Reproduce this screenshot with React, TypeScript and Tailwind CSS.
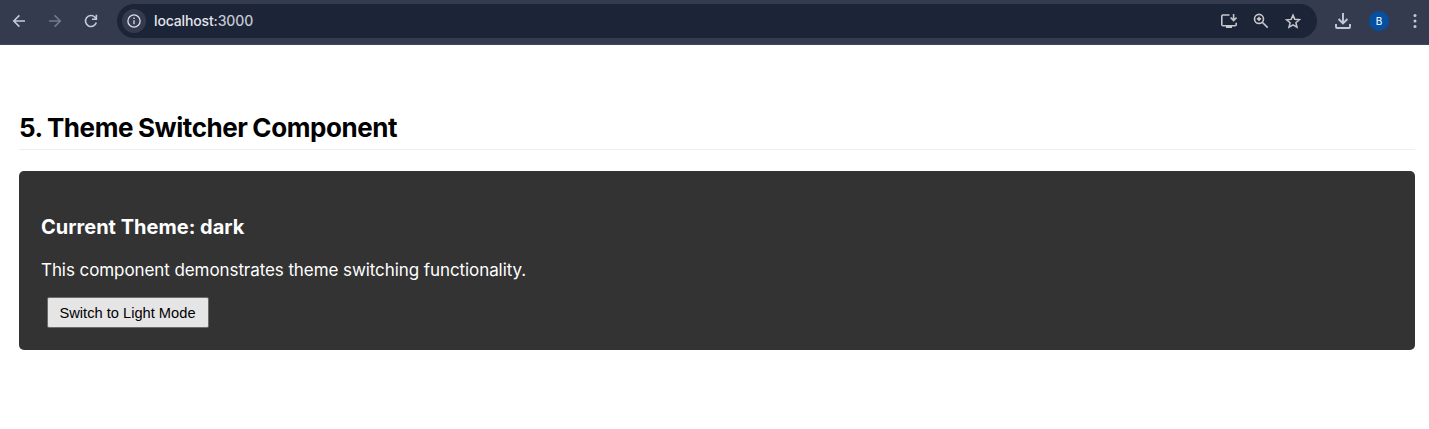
import React, { useState } from "react";

const stroke = { fill: "none", stroke: "currentColor", strokeWidth: 1.6 };

function Toolbar() {
  return (
    <header className="flex h-[45px] items-start border-b border-[#41475a] bg-[#343b4f] pt-1 text-[#c3c9dd]">
      <div className="flex h-[34px] w-[117px] shrink-0 items-center pl-[11px]">
        <svg className="size-4" viewBox="0 0 16 16" {...stroke}>
          <path d="M14 8H3M8.4 2.4 2.8 8l5.6 5.6" />
        </svg>
        <svg className="ml-5 size-4 text-[#747a8e]" viewBox="0 0 16 16" {...stroke}>
          <path d="M2 8h11M7.6 2.4 13.2 8l-5.6 5.6" />
        </svg>
        <svg className="ml-5 size-4" viewBox="0 0 16 16" {...stroke}>
          <path d="M13.3 9.5A5.5 5.5 0 1 1 12 4.2l1.3 1.6M13.4 1.8v4.5H9" />
        </svg>
      </div>
      <div className="flex h-[34px] w-[1200px] shrink-0 items-center rounded-full bg-[#1c2438] pl-[5px] pr-4">
        <span className="flex size-6 items-center justify-center rounded-full bg-[#343b4f] text-[#dcdee8]">
          <svg className="size-4" viewBox="0 0 16 16" fill="none" stroke="currentColor" strokeWidth="1.3">
            <circle cx="8" cy="8" r="6.1" />
            <path d="M8 7.2v4M8 4.5v1.5" />
          </svg>
        </span>
        <span className="ml-2 font-[Inter,sans-serif] text-[14px] font-medium leading-5 tracking-[-0.14px] text-[#e3e5eb]">
          localhost<span className="text-[#c6c9d2]">:3000</span>
        </span>
        <div className="ml-auto flex items-center gap-4 text-[#c7c7c9]">
          <svg className="h-4 w-[18px]" viewBox="0 0 18 16" fill="none" stroke="currentColor" strokeWidth="1.6">
            <path d="M10.5 2H4q-1.2 0-1.2 1v8.7q0 1 1.2 1H16q1.2 0 1.2-1V9.8M14.6 1v6M11.6 4.5l3 3 3-3" />
            <path d="M7 12.4h6V15H7z" fill="currentColor" stroke="none" />
          </svg>
          <svg className="size-4" viewBox="0 0 16 16" fill="none" stroke="currentColor" strokeWidth="1.6">
            <circle cx="6" cy="5.9" r="4.5" />
            <path d="m9.3 9.2 5.4 5.4M6 3.8V8M3.9 5.9h4.2" />
          </svg>
          <svg className="size-4" viewBox="0 0 16 16" fill="none" stroke="currentColor" strokeWidth="1.5">
            <path d="m8 2.1 1.8 4.2 4.6.4-3.5 3 1.1 4.5L8 11.9l-4 2.4 1.1-4.5-3.5-3 4.6-.4z" />
          </svg>
        </div>
      </div>
      <div className="flex h-[34px] items-center pl-[17px]">
        <svg className="size-[18px]" viewBox="0 0 18 18" fill="none" stroke="currentColor" strokeWidth="1.9">
          <path d="M9 1v10M4.6 7 9 11.4 13.4 7M2 12v3q0 1 1 1h12q1 0 1-1v-3" />
        </svg>
        <span className="ml-[17px] flex size-5 items-center justify-center rounded-full bg-[#0550a0] font-[Inter,sans-serif] text-[10px] font-medium text-[#e6eefa]">B</span>
        <svg className="ml-[22px] h-4 w-2" viewBox="0 0 8 16" fill="currentColor">
          <circle cx="4" cy="2.6" r="1.5" />
          <circle cx="4" cy="8" r="1.5" />
          <circle cx="4" cy="13.4" r="1.5" />
        </svg>
      </div>
    </header>
  );
}

export default function App() {
  const [theme, setTheme] = useState("dark");
  const dark = theme === "dark";
  return (
    <div className="h-[429px] overflow-hidden bg-white font-[Inter,sans-serif] text-black">
      <Toolbar />
      <main className="pl-[19px] pr-[14px] pt-[67px]">
        <h2 className="h-[38px] whitespace-nowrap border-b border-[#eeeeee] text-[26px] font-bold leading-8 tracking-[-0.42px] [word-spacing:-0.9px]">
          5. Theme Switcher Component
        </h2>
        <section className={`mt-[21px] h-[179px] rounded-[5px] px-[22px] pt-[42px] ${dark ? "bg-[#333333] text-white" : "bg-[#eeeeee] text-black"}`}>
          <h3 className="whitespace-nowrap text-[20px] font-bold leading-7 tracking-[0.01px]">Current Theme: {theme}</h3>
          <p className="mt-4 whitespace-nowrap text-[17px] leading-[26px] tracking-[-0.08px]">
            This component demonstrates theme switching functionality.
          </p>
          <button
            onClick={() => setTheme(dark ? "light" : "dark")}
            className="ml-[6px] mt-[14px] flex h-[31px] w-[162px] items-center justify-center whitespace-nowrap rounded-[2px] border border-[#6b6b6b] bg-[#e5e5e5] pr-px font-['Liberation_Sans',Arial,sans-serif] text-[14.67px] text-black"
          >
            Switch to {dark ? "Light" : "Dark"} Mode
          </button>
        </section>
      </main>
    </div>
  );
}
